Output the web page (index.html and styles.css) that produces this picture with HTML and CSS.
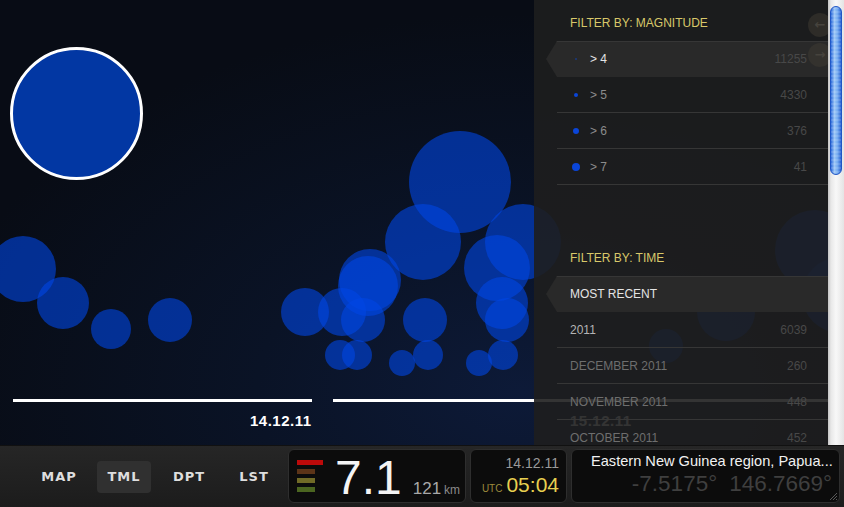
FILE: index.html
```html
<!DOCTYPE html>
<html>
<head>
<meta charset="utf-8">
<link rel="stylesheet" href="styles.css">
</head>
<body>
<div class="app">
  <div class="stage">
    <div class="canvas">
      <span class="bubble" style="left:-10px;top:236px;width:66px;height:66px"></span>
      <span class="bubble" style="left:37px;top:277px;width:52px;height:52px"></span>
      <span class="bubble" style="left:91px;top:309px;width:40px;height:40px"></span>
      <span class="bubble" style="left:148px;top:298px;width:44px;height:44px"></span>
      <span class="bubble" style="left:281px;top:288px;width:48px;height:48px"></span>
      <span class="bubble" style="left:318px;top:288px;width:48px;height:48px"></span>
      <span class="bubble" style="left:341px;top:298px;width:44px;height:44px"></span>
      <span class="bubble" style="left:339px;top:249px;width:62px;height:62px"></span>
      <span class="bubble" style="left:338px;top:256px;width:60px;height:60px"></span>
      <span class="bubble" style="left:385px;top:204px;width:76px;height:76px"></span>
      <span class="bubble" style="left:409px;top:131px;width:102px;height:102px"></span>
      <span class="bubble" style="left:485px;top:204px;width:76px;height:76px"></span>
      <span class="bubble" style="left:464px;top:235px;width:66px;height:66px"></span>
      <span class="bubble" style="left:476px;top:277px;width:52px;height:52px"></span>
      <span class="bubble" style="left:485px;top:298px;width:44px;height:44px"></span>
      <span class="bubble" style="left:403px;top:298px;width:44px;height:44px"></span>
      <span class="bubble" style="left:325px;top:340px;width:30px;height:30px"></span>
      <span class="bubble" style="left:342px;top:340px;width:30px;height:30px"></span>
      <span class="bubble" style="left:389px;top:350px;width:26px;height:26px"></span>
      <span class="bubble" style="left:413px;top:340px;width:30px;height:30px"></span>
      <span class="bubble" style="left:466px;top:350px;width:26px;height:26px"></span>
      <span class="bubble" style="left:488px;top:340px;width:30px;height:30px"></span>
      <span class="bubble" style="left:697px;top:283px;width:58px;height:58px"></span>
      <span class="bubble" style="left:649px;top:329px;width:34px;height:34px"></span>
      <span class="bubble" style="left:775px;top:210px;width:80px;height:80px"></span>
      <span class="bubble" style="left:802px;top:257px;width:76px;height:76px"></span>
      <span class="bubble selected"></span>

      <span class="day-line day-1"></span>
      <span class="day-line day-2"></span>
      <span class="day-label label-1">14.12.11</span>
      <span class="day-label label-2">15.12.11</span>
    </div>

    <aside class="panel">
      <h2 class="group-title">FILTER BY: MAGNITUDE</h2>
      <ul class="list">
        <li class="row active"><span class="row-name"><span class="dot d1"></span><span class="mag-text">&gt; 4</span></span><span class="count">11255</span></li>
        <li class="row"><span class="row-name"><span class="dot d2"></span><span class="mag-text">&gt; 5</span></span><span class="count">4330</span></li>
        <li class="row"><span class="row-name"><span class="dot d3"></span><span class="mag-text">&gt; 6</span></span><span class="count">376</span></li>
        <li class="row"><span class="row-name"><span class="dot d4"></span><span class="mag-text">&gt; 7</span></span><span class="count">41</span></li>
      </ul>

      <h2 class="group-title time-title">FILTER BY: TIME</h2>
      <ul class="list">
        <li class="row active"><span class="row-name">MOST RECENT</span></li>
        <li class="row year"><span class="row-name">2011</span><span class="count">6039</span></li>
        <li class="row month"><span class="row-name">DECEMBER 2011</span><span class="count">260</span></li>
        <li class="row month"><span class="row-name">NOVEMBER 2011</span><span class="count">448</span></li>
        <li class="row month"><span class="row-name">OCTOBER 2011</span><span class="count">452</span></li>
      </ul>

      <span class="round-btn prev">&#8592;</span>
      <span class="round-btn next">&#8594;</span>
    </aside>

    <div class="scrollbar"><div class="thumb"></div></div>
  </div>

  <footer class="bar">
    <nav class="nav">
      <span class="nav-btn">MAP</span>
      <span class="nav-btn on">TML</span>
      <span class="nav-btn">DPT</span>
      <span class="nav-btn">LST</span>
    </nav>

    <div class="box mag">
      <div class="levels">
        <span class="lvl l1"></span>
        <span class="lvl l2"></span>
        <span class="lvl l3"></span>
        <span class="lvl l4"></span>
      </div>
      <div class="readout">
        <span class="magnitude">7.1</span>
        <span class="depth">121</span>
        <span class="unit">km</span>
      </div>
    </div>

    <div class="box date">
      <span class="date-day">14.12.11</span>
      <span class="date-time"><span class="utc">UTC</span><span class="clock">05:04</span></span>
    </div>

    <div class="box loc">
      <span class="place">Eastern New Guinea region, Papua...</span>
      <span class="coords"><span>-7.5175°</span><span>146.7669°</span></span>
      <svg class="grip" width="9" height="9" viewBox="0 0 9 9"><path d="M8 1 L1 8 M8 4 L4 8 M8 7 L7 8" stroke="#5a5a5a" stroke-width="1"/></svg>
    </div>
  </footer>
</div>
</body>
</html>
```

FILE: styles.css
```css
* { box-sizing: border-box; }

html, body {
  margin: 0;
  padding: 0;
  width: 844px;
  height: 507px;
  overflow: hidden;
  background: #080c14;
  font-family: "Liberation Sans", Arial, sans-serif;
}

.app {
  display: flex;
  flex-direction: column;
  width: 844px;
  height: 507px;
}

.stage {
  position: relative;
  height: 445px;
  overflow: hidden;
  background: radial-gradient(ellipse 70% 85% at 62% 88%, #0d1a38 0%, #0a1326 45%, #080c15 100%);
}

.canvas {
  position: absolute;
  inset: 0;
}

.bubble {
  position: absolute;
  border-radius: 50%;
  background: rgba(0, 70, 228, 0.6);
}

.bubble.selected {
  left: 10px;
  top: 47px;
  width: 133px;
  height: 133px;
  background: #0237a3;
  border: 3px solid #ffffff;
}

.day-line {
  position: absolute;
  top: 399px;
  height: 3px;
  background: #ffffff;
}
.day-1 { left: 13px; width: 299px; }
.day-2 { left: 333px; width: 505px; }

.day-label {
  position: absolute;
  top: 412px;
  font: bold 15px/18px "Liberation Sans", Arial, sans-serif;
  letter-spacing: 0.5px;
  color: #ffffff;
}
.label-1 { left: 250px; }
.label-2 { left: 570px; }

/* ---------- side panel ---------- */
.panel {
  position: absolute;
  left: 534px;
  top: 0;
  width: 294px;
  height: 445px;
  background: rgba(30, 30, 30, 0.9);
  overflow: hidden;
}

.group-title {
  margin: 15px 0 10px 36px;
  height: 16px;
  font: normal 12px/16px "Liberation Sans", Arial, sans-serif;
  color: #d8c86a;
}
.time-title { margin-top: 65px; }

.list {
  list-style: none;
  margin: 0;
  padding: 0;
}

.row {
  display: flex;
  align-items: center;
  justify-content: space-between;
  height: 36px;
  margin-left: 23px;
  padding: 0 21px 0 13px;
  border-bottom: 1px solid #363636;
  font-size: 12px;
  color: #8c8c8c;
}

.row.active {
  margin-left: 12px;
  padding-left: 24px;
  border-bottom: none;
  background: #292929;
  box-shadow: inset 0 1px 0 #363636;
  clip-path: polygon(11px 0, 100% 0, 100% 100%, 11px 100%, 0 50%);
  color: #e4e4e4;
}

.row.year { color: #b4b4b4; }
.row.month { color: #6e6e6e; }

.row-name {
  display: flex;
  align-items: center;
}

.dot {
  width: 12px;
  display: flex;
  justify-content: center;
  margin-right: 8px;
}
.dot::before {
  content: "";
  display: block;
  border-radius: 50%;
  background: #0a45d8;
}
.d1::before { width: 2px; height: 2px; background: #1a3a80; }
.d2::before { width: 4px; height: 4px; }
.d3::before { width: 6px; height: 6px; }
.d4::before { width: 8px; height: 8px; }

.count { color: #484848; }

.round-btn {
  position: absolute;
  left: 274px;
  width: 24px;
  height: 24px;
  border-radius: 50%;
  background: #2e2c28;
  color: #46433d;
  font: bold 13px/24px "DejaVu Sans", sans-serif;
  text-align: center;
}
.prev { top: 13px; }
.next { top: 43px; background: #34322e; }

.scrollbar {
  position: absolute;
  left: 828px;
  top: 0;
  width: 16px;
  height: 445px;
  background: linear-gradient(to right, #c4c4c4 0, #e8e8e8 3px, #f8f8f8 8px, #e4e4e4 100%);
  padding: 6px 2px 0 2px;
}

.thumb {
  height: 169px;
  border-radius: 6px;
  border: 1px solid #1f56c6;
  background:
    repeating-linear-gradient(to bottom, rgba(255,255,255,0.12) 0 2px, rgba(255,255,255,0) 2px 4px),
    linear-gradient(to right, #2f6cdc 0%, #9cc6f6 35%, #74aaf0 65%, #2a64d4 100%);
}

/* ---------- bottom bar ---------- */
.bar {
  display: flex;
  height: 62px;
  padding: 3px 4px 3px 0;
  border-top: 1px solid #111;
  background: linear-gradient(#262626, #1c1c1c);
}

.nav {
  display: flex;
  align-items: center;
  gap: 11px;
  width: 288px;
  padding-left: 32px;
}

.nav-btn {
  width: 54px;
  height: 32px;
  border-radius: 4px;
  font: bold 13px/32px "DejaVu Sans", sans-serif;
  letter-spacing: 1px;
  text-align: center;
  color: #dedede;
}
.nav-btn.on { background: #303030; }

.box {
  height: 54px;
  border: 1px solid #2e2e2e;
  border-radius: 6px;
  background: #0c0c0c;
}

.mag {
  width: 178px;
  display: flex;
  align-items: flex-start;
  padding: 10px 0 0 8px;
}

.levels {
  display: flex;
  flex-direction: column;
  gap: 4px;
  width: 26px;
}
.lvl { display: block; height: 5px; }
.l1 { width: 26px; background: #bd0a0a; }
.l2 { width: 18px; background: #5c3418; }
.l3 { width: 18px; background: #716b27; }
.l4 { width: 18px; background: #4b6520; }

.readout {
  display: flex;
  align-items: baseline;
  margin: -6px 0 0 12px;
}
.magnitude {
  font: normal 48px/48px "Liberation Sans", Arial, sans-serif;
  color: #f4f4f4;
}
.depth {
  margin-left: 11px;
  font-size: 17px;
  color: #a8a8a8;
}
.unit {
  margin-left: 3px;
  font-size: 12px;
  color: #8a8a8a;
}

.date {
  width: 97px;
  margin-left: 4px;
  display: flex;
  flex-direction: column;
  align-items: flex-end;
  padding: 5px 7px 0 0;
}
.date-day {
  font-size: 14px;
  line-height: 16px;
  color: #9a9a9a;
}
.date-time {
  display: flex;
  align-items: baseline;
  margin-top: 2px;
  line-height: 24px;
}
.utc {
  font-size: 10px;
  color: #9c8b3c;
  margin-right: 4px;
}
.clock {
  font-size: 21px;
  color: #e8d050;
}

.loc {
  position: relative;
  flex: 1;
  margin-left: 4px;
  display: flex;
  flex-direction: column;
  align-items: flex-end;
  padding: 2px 7px 0 19px;
  overflow: hidden;
}
.place {
  align-self: flex-start;
  font-size: 14.6px;
  line-height: 18px;
  color: #f2f2f2;
  white-space: nowrap;
}
.coords {
  display: flex;
  gap: 12px;
  margin-top: 0;
  font-size: 22.5px;
  line-height: 28px;
  color: #3f3f3f;
}
.grip {
  position: absolute;
  right: 1px;
  bottom: 1px;
}
```
